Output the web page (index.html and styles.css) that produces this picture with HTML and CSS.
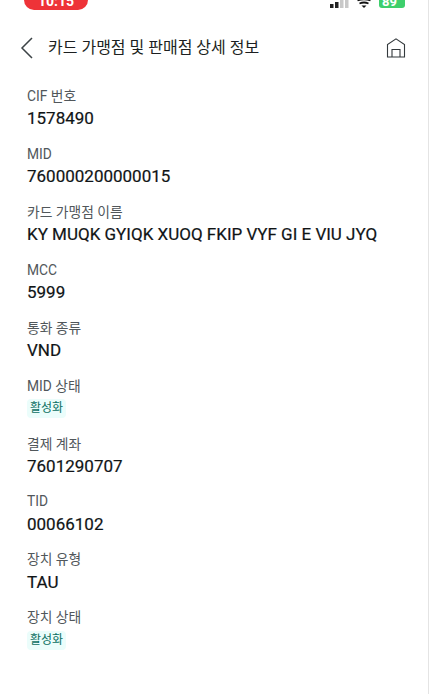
FILE: index.html
```html
<!DOCTYPE html>
<html lang="ko">
<head>
<meta charset="utf-8">
<title>카드 가맹점 및 판매점 상세 정보</title>
<link rel="stylesheet" href="styles.css">
</head>
<body>
<div class="page">
  <div class="status">
    <div class="time">10:15</div>
    <div class="status-icons">
      <svg class="signal" width="19" height="8" viewBox="0 0 19 8"><rect x="0" y="4" width="3.500" height="4" fill="#222"/><rect x="5" y="2" width="3.500" height="6" fill="#222"/><rect x="10" y="0" width="3.500" height="8" fill="#c8c8c8"/><rect x="15" y="0" width="3.500" height="8" fill="#c8c8c8"/></svg>
      <svg class="wifi" width="14" height="8" viewBox="0 0 14 8"><path d="M0.500 0.500Q7 -2 13.500 0.500M2.500 3.500Q7 1.500 11.500 3.500" fill="none" stroke="#111" stroke-width="1.800"/><path d="M4.500 5.500L9.500 5.500L7 8Z" fill="#111"/></svg>
      <div class="battery">89</div>
    </div>
  </div>
  <header class="bar">
    <svg class="back" width="14" height="22" viewBox="0 0 14 22"><path d="M12 1L2 11L12 21" fill="none" stroke="#3c4346" stroke-width="1.500"/></svg>
    <h1 class="title">카드 가맹점 및 판매점 상세 정보</h1>
    <svg class="home" width="20" height="20" viewBox="0 0 20 20"><path d="M1.500 19V6.500L10 0.800L18.500 6.500V19ZM6 19V11.500H14V19" fill="none" stroke="#33393c" stroke-width="1.100"/></svg>
  </header>
  <main class="list">
    <div class="item"><div class="label">CIF 번호</div><div class="value">1578490</div></div>
    <div class="item"><div class="label">MID</div><div class="value">760000200000015</div></div>
    <div class="item"><div class="label">카드 가맹점 이름</div><div class="value">KY MUQK GYIQK XUOQ FKIP VYF GI E VIU JYQ</div></div>
    <div class="item"><div class="label">MCC</div><div class="value">5999</div></div>
    <div class="item"><div class="label">통화 종류</div><div class="value">VND</div></div>
    <div class="item"><div class="label">MID 상태</div><div class="value"><span class="tag">활성화</span></div></div>
    <div class="item"><div class="label">결제 계좌</div><div class="value">7601290707</div></div>
    <div class="item"><div class="label">TID</div><div class="value">00066102</div></div>
    <div class="item"><div class="label">장치 유형</div><div class="value">TAU</div></div>
    <div class="item"><div class="label">장치 상태</div><div class="value"><span class="tag">활성화</span></div></div>
  </main>
</div>
</body>
</html>
```
FILE: styles.css
```css
* { box-sizing: border-box; }
html, body { margin: 0; padding: 0; background: #fff; }
body { font-family: Roboto, "Noto Sans CJK KR", sans-serif; overflow: hidden; }
.page { width: 429px; height: 694px; border-right: 1px solid #e4e4e4; overflow: hidden; }
.status { height: 10px; display: flex; justify-content: space-between; align-items: flex-start; padding: 0 23px 0 24px; }
.time { width: 64px; height: 10px; background: #ee3338; border-radius: 0 0 12px 12px; color: #fff; font-size: 14px; font-weight: 700; line-height: 2px; text-align: center; overflow: hidden; }
.status-icons { display: flex; align-items: flex-start; gap: 8px; height: 10px; }
.battery { width: 26px; height: 8px; background: #3ecf6c; border-radius: 0 0 3px 3px; color: #fff; font-size: 13px; font-weight: 700; line-height: 3px; padding-left: 3px; overflow: hidden; }
.bar { height: 56px; margin-top: 10px; display: flex; align-items: center; padding: 0 22px 0 20px; }
.back { flex: none; }
.title { flex: 1; margin: 0 0 0 14px; font-size: 16px; font-weight: 400; color: #1c1f21; line-height: 24px; }
.home { flex: none; }
.list { padding: 0 27px; margin-top: 10.200px; }
.item { height: 57.900px; }
.label { font-size: 13.800px; line-height: 20px; color: #51575b; }
.value { font-size: 17px; font-weight: 400; line-height: 24px; margin-top: 0.300px; color: #101416; -webkit-text-stroke: 0.2px #101416; }
.tag { display: inline-block; background: #ebfdfb; color: #0a6f62; border-radius: 4px; font-size: 12px; font-weight: 400; line-height: 19px; padding: 0 3px; vertical-align: top; margin-top: 3.500px; -webkit-text-stroke: 0; }
```
